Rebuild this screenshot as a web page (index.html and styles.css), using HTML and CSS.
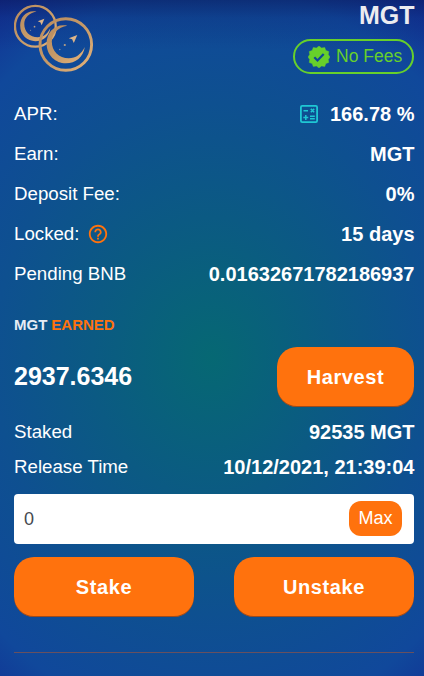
FILE: index.html
```html
<!DOCTYPE html>
<html lang="en">
<head>
<meta charset="utf-8">
<title>MGT pool</title>
<link rel="stylesheet" href="styles.css">
</head>
<body>
<main class="card">
  <header class="head">
    <svg class="logo" width="80" height="72" viewBox="0 0 80 72">
      <defs>
        <linearGradient id="gold" x1="0" y1="0" x2="1" y2="1">
          <stop offset="0" stop-color="#b98b5e"/><stop offset=".5" stop-color="#c69a68"/><stop offset="1" stop-color="#e5b37a"/>
        </linearGradient>
        <g id="coin">
          <circle cx="27" cy="27" r="25.800" fill="none" stroke="url(#gold)" stroke-width="2.900"/>
          <path d="M28.500 8.200C16 6 7.800 15 7.800 26C7.800 38 17 45.800 27 45.800C37 45.800 44.500 39.500 46 29.500C42 37 37 40.800 30 40.800C20 40.800 13 33.500 13 24C13 16 19 10 28.500 8.200Z" fill="url(#gold)"/>
          <path d="M38.500 17.500L30 20.700L33.300 21.800L35 25.500Z" fill="#ddb58a"/>
          <circle cx="26" cy="27.500" r="1.100" fill="#b9a083"/><circle cx="21" cy="32" r=".7" fill="#9298a0"/>
        </g>
      </defs>
      <use href="#coin" transform="translate(0 1) scale(.79)"/>
      <use href="#coin" transform="translate(24.800 13.500)"/>
    </svg>
    <div class="head-info">
      <h1 class="title">MGT</h1>
      <div class="badge">
        <svg width="22" height="22" viewBox="0 0 22 22">
          <path d="M11 0L13.600 2L16.700 1.400L17.900 4.400L20.800 5.500L20.300 8.600L22 11L20.300 13.500L20.800 16.500L17.900 17.600L16.700 20.600L13.600 20L11 22L8.400 20L5.300 20.600L4.100 17.600L1.200 16.500L1.700 13.500L0 11L1.700 8.600L1.200 5.500L4.100 4.400L5.300 1.400L8.400 2Z" fill="#67d02b" stroke="#67d02b" stroke-width=".4" stroke-linejoin="round"/>
          <path d="M6.300 11.300L9.500 14.500L15.700 8" fill="none" stroke="#0e4797" stroke-width="2.200"/>
        </svg>
        <span>No Fees</span>
      </div>
    </div>
  </header>

  <dl class="stats">
    <div class="row"><dt>APR:</dt><dd>
      <svg class="calc" width="18" height="18" viewBox="0 0 18 18" fill="none" stroke="#1fc7d4" stroke-width="1.500">
        <rect x=".9" y=".9" width="16.200" height="16.200" rx="1.300" stroke-width="1.800"/>
        <path d="M3.500 5.700H8M10.800 3.900L14.200 7.300M14.200 3.900L10.800 7.300M3.300 12.400H8.300M5.800 9.900V14.900M10 11.200H14.800M10 13.700H14.800"/>
      </svg>166.78 %</dd></div>
    <div class="row"><dt>Earn:</dt><dd>MGT</dd></div>
    <div class="row"><dt>Deposit Fee:</dt><dd>0%</dd></div>
    <div class="row"><dt>Locked:
      <svg class="help" width="22" height="22" viewBox="0 0 24 24" fill="#ff720d"><path d="M11 18H13V16H11V18ZM12 2C6.480 2 2 6.480 2 12S6.480 22 12 22S22 17.520 22 12S17.520 2 12 2ZM12 20C7.590 20 4 16.410 4 12S7.590 4 12 4S20 7.590 20 12S16.410 20 12 20ZM12 6C9.790 6 8 7.790 8 10H10C10 8.900 10.900 8 12 8S14 8.900 14 10C14 12 11 11.750 11 15H13C13 12.750 16 12.500 16 10C16 7.790 14.210 6 12 6Z"/></svg></dt><dd>15 days</dd></div>
    <div class="row"><dt>Pending BNB</dt><dd>0.01632671782186937</dd></div>
  </dl>

  <div class="earned-label"><span>MGT</span><span class="accent">EARNED</span></div>
  <div class="harvest">
    <strong class="amount">2937.6346</strong>
    <button class="btn btn-harvest">Harvest</button>
  </div>

  <dl class="stats stats-tight">
    <div class="row"><dt>Staked</dt><dd>92535 MGT</dd></div>
    <div class="row"><dt>Release Time</dt><dd>10/12/2021, 21:39:04</dd></div>
  </dl>

  <div class="field"><span>0</span><button class="max">Max</button></div>
  <div class="actions">
    <button class="btn">Stake</button>
    <button class="btn">Unstake</button>
  </div>
  <hr class="divider">
</main>
</body>
</html>
```
FILE: styles.css
```css
* { box-sizing: border-box; }
body {
  margin: 0;
  font-family: "Liberation Sans", Arial, sans-serif;
  color: #fff;
}
.card {
  height: 676px;
  padding: 0 9.500px 0 14px;
  overflow: hidden;
  background:
    linear-gradient(to bottom, rgba(10, 20, 85, .5), rgba(10, 25, 100, .2) 18px, transparent 50px),
    radial-gradient(375px 440px at 50% 53%, #066873 0%, #0b5a83 32%, #0e5090 58%, #10489b 84%, #122f94 100%);
}
.head {
  display: flex;
  justify-content: space-between;
  height: 94px;
}
.logo { margin-top: 3.500px; }
.head-info {
  display: flex;
  flex-direction: column;
  align-items: flex-end;
}
.title {
  margin: 0;
  font-size: 25px;
  line-height: 30px;
  color: #ececf0;
}
.badge {
  display: flex;
  align-items: center;
  gap: 6px;
  width: 121px;
  height: 35px;
  margin: 9px .5px 0 0;
  padding-left: 13px;
  border: 2px solid #67d02b;
  border-radius: 18px;
  color: #67d02b;
  font-size: 17.500px;
  white-space: nowrap;
}
.stats { margin: 0; }
.row {
  display: flex;
  align-items: center;
  justify-content: space-between;
  height: 40px;
}
.row dt {
  display: flex;
  align-items: center;
  font-size: 18.700px;
}
.row dd {
  display: flex;
  align-items: center;
  margin: 0;
  font-size: 20px;
  font-weight: 700;
}
.calc { margin-right: 12px; }
.help { margin-left: 8px; }
.earned-label {
  display: flex;
  gap: 4px;
  margin-top: 22px;
  height: 31px;
  font-size: 15px;
  font-weight: 700;
  line-height: 18px;
  color: #e6ecf5;
}
.accent { color: #ff720d; }
.harvest {
  display: flex;
  align-items: center;
  justify-content: space-between;
  height: 60px;
}
.amount {
  padding-bottom: 2px;
  font-size: 25px;
}
.btn {
  height: 60px;
  padding: 0;
  border: 0;
  border-radius: 20px;
  background: #ff720d;
  box-shadow: inset 0 -1px 0 rgba(14, 14, 44, .4);
  color: #fff;
  font: 700 20px "Liberation Sans", Arial, sans-serif;
  letter-spacing: .6px;
}
.btn-harvest { width: 137px; margin-right: .5px; }
.stats-tight { margin-top: 8px; }
.stats-tight .row { height: 35px; }
.stats-tight dt { padding-bottom: 2px; }
.field {
  display: flex;
  align-items: center;
  justify-content: space-between;
  width: 400px;
  height: 50px;
  margin-top: 9px;
  padding: 0 12px 0 10px;
  border-radius: 4px;
  background: #fff;
  color: #45494f;
  font-size: 18px;
}
.max {
  width: 53px;
  height: 35px;
  margin-bottom: 1px;
  padding: 0 0 1px;
  border: 0;
  border-radius: 12px;
  background: #ff720d;
  color: #fff;
  font: 18px "Liberation Sans", Arial, sans-serif;
}
.actions {
  display: grid;
  grid-template-columns: 180px 180px;
  gap: 40px;
  margin-top: 13px;
}
.divider {
  width: 400px;
  height: 1px;
  margin: 35px 0 0;
  border: 0;
  background: #68505f;
}
```
